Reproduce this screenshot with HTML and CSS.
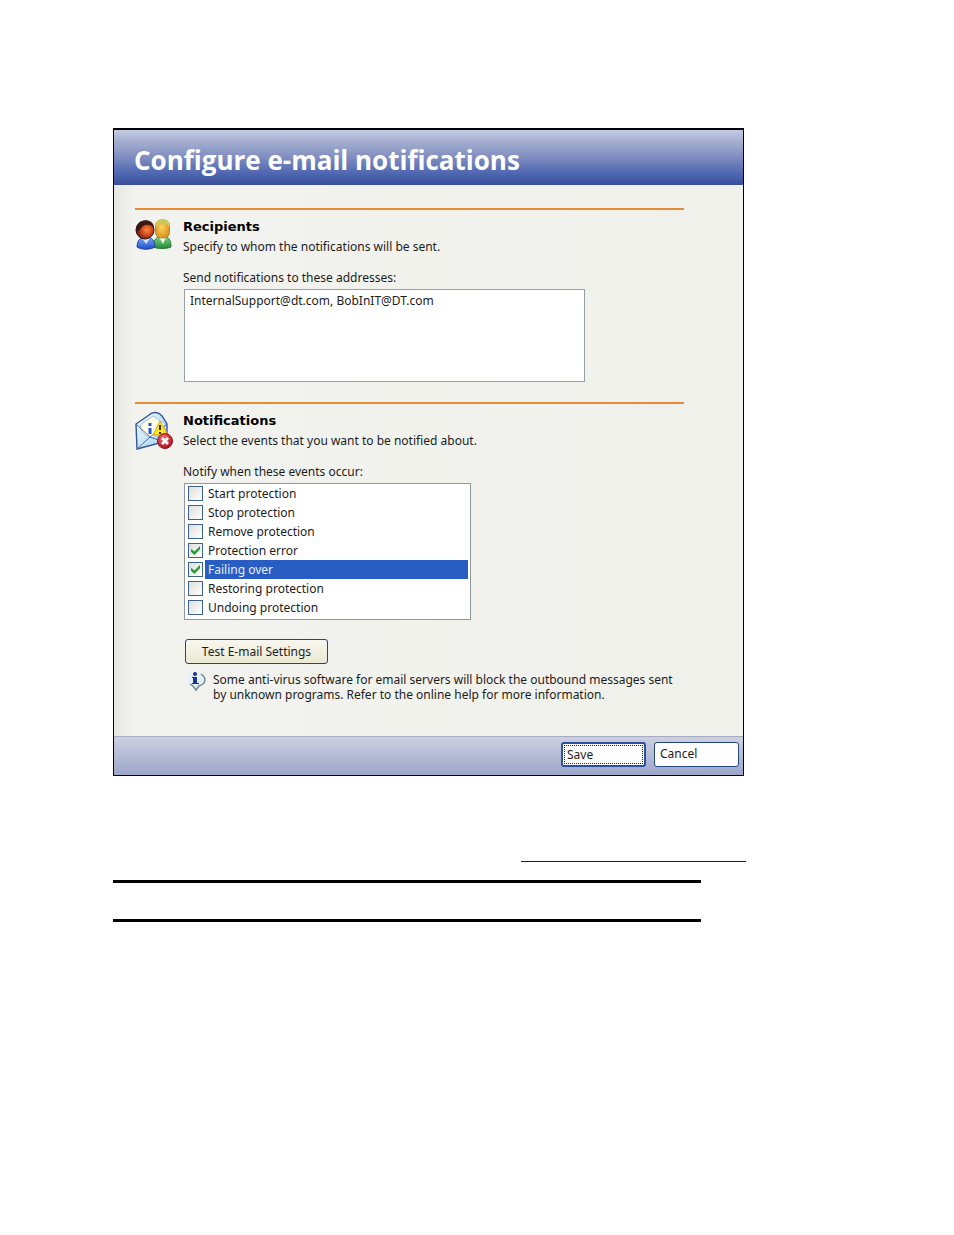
FILE: index.html
```html
<!DOCTYPE html>
<html lang="en">
<head>
<meta charset="utf-8">
<title>Configure e-mail notifications</title>
<link rel="stylesheet" href="styles.css">
</head>
<body>
<main class="page">
  <form class="dialog">
    <header class="titlebar"><h1 class="title">Configure e-mail notifications</h1></header>
    <div class="content">
      <section class="section">
        <svg class="icon" viewBox="0 0 38 38" aria-hidden="true">
          <defs>
            <radialGradient id="faceA" cx=".6" cy=".5" r=".6"><stop offset="0" stop-color="#ff8a3c"/><stop offset=".55" stop-color="#c8431a"/><stop offset="1" stop-color="#4a1410"/></radialGradient>
            <radialGradient id="faceB" cx=".45" cy=".4" r=".65"><stop offset="0" stop-color="#ffd35e"/><stop offset="1" stop-color="#d98a1c"/></radialGradient>
            <linearGradient id="shirtA" x2="0" y2="1"><stop offset="0" stop-color="#7db0ff"/><stop offset="1" stop-color="#1f49c4"/></linearGradient>
            <linearGradient id="shirtB" x2="0" y2="1"><stop offset="0" stop-color="#8fd68a"/><stop offset="1" stop-color="#1f8a35"/></linearGradient>
          </defs>
          <path d="M18 30c0-7 4-11 10-11s8 5 8 11c-5 2-13 2-18 0z" fill="url(#shirtB)" stroke="#2c7a38"/>
          <path d="M24 20l4 7 3-7z" fill="#f4fff0"/>
          <rect x="20.500" y="3" width="14" height="18" rx="5.500" fill="url(#faceB)" stroke="#9a9a35"/>
          <path d="M20 10c-1-10 16-10 15 0-4-4-11-4-15 0z" fill="#cfc65a"/>
          <path d="M2 30c0-6 3-10 9-10s9 4 9 10c-5 3-13 3-18 0z" fill="url(#shirtA)" stroke="#2346a8"/>
          <path d="M7 21l4 6 4-6z" fill="#d6e6ff"/>
          <circle cx="10" cy="13" r="9" fill="url(#faceA)" stroke="#35100e"/>
          <path d="M1 14C0 1 18 0 19 10c-5-3-9-3-12 0-2 2-3 5-6 4z" fill="#3b1716"/>
        </svg>
        <div class="section-body">
          <h2 class="heading">Recipients</h2>
          <p class="description">Specify to whom the notifications will be sent.</p>
          <label class="label" for="addresses">Send notifications to these addresses:</label>
          <textarea class="addresses" id="addresses">InternalSupport@dt.com, BobInIT@DT.com</textarea>
        </div>
      </section>
      <section class="section">
        <svg class="icon icon-mail" viewBox="0 0 38 42" aria-hidden="true">
          <defs>
            <linearGradient id="mail" x2="1" y2="1"><stop offset="0" stop-color="#f4fbff"/><stop offset="1" stop-color="#9fd0f0"/></linearGradient>
            <radialGradient id="stop" cx=".4" cy=".3" r=".7"><stop offset="0" stop-color="#f07070"/><stop offset="1" stop-color="#b01220"/></radialGradient>
          </defs>
          <path d="M1 13L14 4c4-4 10-3 13 1l5 8v17L2 38z" fill="url(#mail)" stroke="#35569b" stroke-width="1.400"/>
          <path d="M5 14L18 5l12 8-1 9-13 5-9-6z" fill="#fffde6" stroke="#a9c3dc"/>
          <path d="M1 13l14 13L2 38M15 26l17-13M15 26l14 5" fill="none" stroke="#4772ad"/>
          <path d="M15 12v3M15 17v6" stroke="#2756cf" stroke-width="3"/>
          <path d="M25 10l8 14H18z" fill="#ffe42a" stroke="#d2aa0b"/>
          <path d="M25 14v5M25 21v2" stroke="#39300a" stroke-width="2"/>
          <circle cx="30" cy="30" r="7.500" fill="url(#stop)" stroke="#8e1019"/>
          <path d="M27 27l6 6M33 27l-6 6" stroke="#fff" stroke-width="2.600"/>
        </svg>
        <div class="section-body">
          <h2 class="heading">Notifications</h2>
          <p class="description">Select the events that you want to be notified about.</p>
          <p class="label" id="events-label">Notify when these events occur:</p>
          <div class="events" role="group" aria-labelledby="events-label">
            <label class="event"><input class="check" type="checkbox"><span class="event-name">Start protection</span></label>
            <label class="event"><input class="check" type="checkbox"><span class="event-name">Stop protection</span></label>
            <label class="event"><input class="check" type="checkbox"><span class="event-name">Remove protection</span></label>
            <label class="event"><input class="check" type="checkbox" checked><span class="event-name">Protection error</span></label>
            <label class="event event-selected"><input class="check" type="checkbox" checked><span class="event-name">Failing over</span></label>
            <label class="event"><input class="check" type="checkbox"><span class="event-name">Restoring protection</span></label>
            <label class="event"><input class="check" type="checkbox"><span class="event-name">Undoing protection</span></label>
          </div>
          <button class="button button-test" type="button">Test E-mail Settings</button>
          <div class="note">
            <svg class="note-icon" viewBox="0 0 20 20" aria-hidden="true">
              <path d="M9 1c6 0 9 3 9 7 0 3-3 6-6 6l-3 5-2-5C4 14 1 11 1 8s3-7 8-7z" fill="#e6f0f8"/>
              <path d="M14 2c6 4 5 10-2 12l-3 4-3-4-3-2" fill="none" stroke="#6d8594" stroke-width="1.500"/>
              <path d="M5 5h5v6h2v1H5v-1h1V6H5z" fill="#1c319c"/><circle cx="8" cy="2" r="2" fill="#1c319c"/>
            </svg>
            <p class="note-text">Some anti-virus software for email servers will block the outbound messages sent by unknown programs. Refer to the online help for more information.</p>
          </div>
        </div>
      </section>
    </div>
    <footer class="actions">
      <button class="button button-save" type="button"><span class="focus-ring">Save</span></button>
      <button class="button button-cancel" type="button">Cancel</button>
    </footer>
  </form>
  <a class="reference-link" href="#" aria-label="Reference"></a>
  <div class="ruled"></div>
</main>
</body>
</html>
```
FILE: styles.css
```css
* { box-sizing: border-box; }
body {
  margin: 0;
  background: #fff;
  color: #1c1c1c;
  font: 12px/20px "Noto Sans", sans-serif;
}
h1, h2, p { margin: 0; }
.page { padding: 128px 210px 48px 113px; }
.dialog {
  border: 1px solid #000;
  border-width: 2px 1px 1px;
  background: #f0f1eb;
}
.titlebar {
  display: flex;
  align-items: center;
  height: 55px;
  padding: 0 20px;
  background: linear-gradient(#c3cce8 0, #a5b0cf 20%, #7f8dc0 50%, #5068b2 78%, #3a4f9c 100%);
}
.title {
  color: #fff;
  font: bold 26px/32px "Open Sans", sans-serif;
  padding-top: 4px;
}
.content {
  padding: 23px 59px 34px 21px;
  background: linear-gradient(90deg, #e6e6e3 0, #f2f3ee 20px, #f0f1eb 100%);
}
.section {
  display: flex;
  align-items: flex-start;
  padding-top: 7px;
  border-top: 2px solid #e88c34;
}
.section + .section { margin-top: 20px; }
.icon { flex: none; width: 38px; height: 38px; margin-right: 10px; }
.icon-mail { height: 42px; }
.section-body { flex: 1; min-width: 0; }
.heading { color: #000; font: bold 13px/20px "DejaVu Sans", sans-serif; }
.label { display: block; margin-top: 11px; padding-bottom: 1px; }
.addresses {
  display: block;
  width: 80%;
  height: 93px;
  margin-left: 1px;
  padding: 1px 5px;
  border: 1px solid #9a9fa5;
  background: #fff;
  color: inherit;
  font: inherit;
  resize: none;
}
.events {
  width: 287px;
  margin-left: 1px;
  padding: 0 2px 2px;
  border: 1px solid #8f979f;
  background: #fff;
}
.event { display: flex; align-items: center; height: 19px; }
.check {
  appearance: none;
  flex: none;
  width: 15px;
  height: 15px;
  margin: 0 2px 0 1px;
  border: 1px solid #3a6391;
  background: linear-gradient(135deg, #dedfdb, #fff);
}
.check:checked { position: relative; }
.check:checked::after {
  content: "";
  position: absolute;
  inset: 2px;
  background: #2a9a34;
  clip-path: polygon(0 30%, 38% 60%, 100% 0, 100% 35%, 38% 100%, 0 65%);
}
.event-name { flex: 1; padding-left: 3px; line-height: 19px; }
.event-selected .event-name { background: #2a5dc4; color: #e8efff; }
.button {
  height: 25px;
  padding: 0;
  border: 1px solid #24477f;
  border-radius: 3px;
  background: #fff;
  color: inherit;
  font: inherit;
}
.button-test {
  display: block;
  width: 143px;
  margin: 19px 0 8px 2px;
  background: linear-gradient(#f8f7ef, #ebe8d2);
}
.note { display: flex; gap: 6px; margin-left: 4px; }
.note-icon { flex: none; width: 20px; height: 20px; }
.note-text { padding-right: 8px; line-height: 15px; }
.actions {
  display: flex;
  justify-content: flex-end;
  align-items: center;
  gap: 8px;
  height: 39px;
  padding: 0 4px 4px;
  border-top: 1px solid #a7adc4;
  background: linear-gradient(#ccd0e0, #9ca6ca);
}
.button-save, .button-cancel { width: 85px; text-align: left; }
.button-save { padding: 1px; border: 2px solid #2c4f9e; }
.button-cancel { padding-left: 5px; }
.focus-ring {
  display: block;
  padding-left: 2px;
  border: 1px dotted #222;
  line-height: 17px;
}
.reference-link {
  display: block;
  width: 225px;
  height: 86px;
  margin: 0 -2px 0 auto;
  border-bottom: 1px solid #0000ff;
}
.ruled {
  width: 588px;
  max-width: 100%;
  height: 42px;
  margin-top: 18px;
  border: solid #000;
  border-width: 3px 0;
}
```
